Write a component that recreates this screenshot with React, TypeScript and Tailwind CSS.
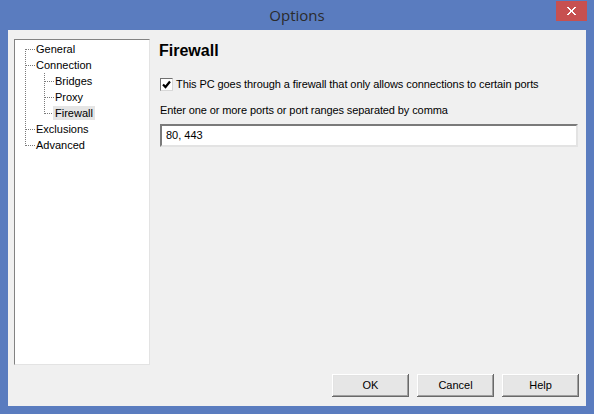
const font = { fontFamily: '"Liberation Sans", Arial, sans-serif' };

type Node = { label: string; depth: number; selected?: boolean };

const nodes: Node[] = [
  { label: "General", depth: 0 },
  { label: "Connection", depth: 0 },
  { label: "Bridges", depth: 1 },
  { label: "Proxy", depth: 1 },
  { label: "Firewall", depth: 1, selected: true },
  { label: "Exclusions", depth: 0 },
  { label: "Advanced", depth: 0 },
];

function TreeLines() {
  // dotted connectors, pixel aligned
  const rowCenter = (i: number) => 9 + i * 16 + 0.5;
  return (
    <svg
      className="absolute left-0 top-0 pointer-events-none"
      width="134"
      height="120"
      shapeRendering="crispEdges"
    >
      <g stroke="#7a7a7a" strokeWidth="1" strokeDasharray="1 1" fill="none">
        <line x1="10.5" y1="9" x2="10.5" y2={rowCenter(6)} />
        {[0, 1, 5, 6].map((i) => (
          <line key={i} x1="11" y1={rowCenter(i)} x2="20" y2={rowCenter(i)} />
        ))}
        <line x1="29.5" y1="33" x2="29.5" y2={rowCenter(4)} />
        {[2, 3, 4].map((i) => (
          <line key={i} x1="30" y1={rowCenter(i)} x2="39" y2={rowCenter(i)} />
        ))}
      </g>
    </svg>
  );
}

function Tree() {
  return (
    <div className="relative w-[136px] h-[326px] bg-white border border-t-[#828282] border-l-[#828282] border-r-[#e3e3e3] border-b-[#e3e3e3] pt-[1px]">
      <TreeLines />
      {nodes.map((n) => (
        <div
          key={n.label}
          className={`h-[16px] flex items-center ${n.depth === 0 ? "pl-[19px]" : "pl-[38px]"}`}
        >
          <span
            className={`relative h-[14px] leading-[14px] px-[2px] text-[11px] text-black ${
              n.selected ? "bg-[#e5e5e5]" : ""
            }`}
          >
            {n.label}
          </span>
        </div>
      ))}
    </div>
  );
}

function Button({ children }: { children: string }) {
  return (
    <button className="w-[77px] h-[23px] bg-[#e6e6e6] text-[11px] text-black shadow-[inset_-1px_-1px_#696969,inset_1px_1px_#ffffff,inset_-2px_-2px_#a0a0a0,inset_2px_2px_#e3e3e3]">
      {children}
    </button>
  );
}

export default function App() {
  return (
    <div className="w-[594px] h-[414px] bg-[#5a7cbf] flex flex-col overflow-hidden" style={font}>
      <div className="relative h-[30px] flex items-center justify-center shrink-0">
        <span className="text-[15px] text-[#2b2b2b]" style={{ fontFamily: '"Open Sans", "Noto Sans", sans-serif' }}>
          Options
        </span>
        <div className="absolute right-[7px] top-[1px] w-[31px] h-[20px] bg-[#c75050] flex items-center justify-center">
          <svg width="9" height="8" viewBox="0 0 9 8" shapeRendering="crispEdges">
            <path d="M0 0h2v1h1v1h1v1h1V2h1V1h1V0h2v1H8v1H7v1H6v2h1v1h1v1h1v1H7V7H6V6H5V5H4v1H3v1H2v1H0V7h1V6h1V5h1V3H2V2H1V1H0z" fill="#ffffff" />
          </svg>
        </div>
      </div>

      <div className="mx-[8px] h-[376px] bg-[#f0f0f0] flex flex-col">
        <div className="flex pt-[9px] pl-[6px]">
          <Tree />
          <div className="flex-1 pl-[9px] pr-[8px]">
            <div className="text-[16px] font-bold text-black leading-[20px] mt-[2px]">Firewall</div>
            <label className="flex items-center mt-[17px] ml-[1px] h-[13px]">
              <span className="w-[13px] h-[13px] bg-white border border-t-[#707070] border-l-[#707070] border-r-[#d8d8d8] border-b-[#d8d8d8] flex items-center justify-center">
                <svg width="9" height="9" viewBox="0 0 9 9">
                  <path d="M1 4.5 L3.5 7 L8 1.5" stroke="#000" strokeWidth="2.2" fill="none" />
                </svg>
              </span>
              <span className="ml-[3px] text-[11px] text-black tracking-[-0.08px]">
                This PC goes through a firewall that only allows connections to certain ports
              </span>
            </label>
            <div className="mt-[12px] ml-[1px] text-[11px] text-black leading-[14px] tracking-[-0.1px]">
              Enter one or more ports or port ranges separated by comma
            </div>
            <div className="mt-[7px] ml-[1px] h-[23px] bg-white border-2 border-t-[#7a7a7a] border-l-[#7a7a7a] border-r-[#e3e3e3] border-b-[#e3e3e3] flex items-center pl-[4px] text-[11px] text-black">
              80, 443
            </div>
          </div>
        </div>
        <div className="flex justify-end gap-[8px] mt-[9px] pr-[7px]">
          <Button>OK</Button>
          <Button>Cancel</Button>
          <Button>Help</Button>
        </div>
      </div>
    </div>
  );
}
